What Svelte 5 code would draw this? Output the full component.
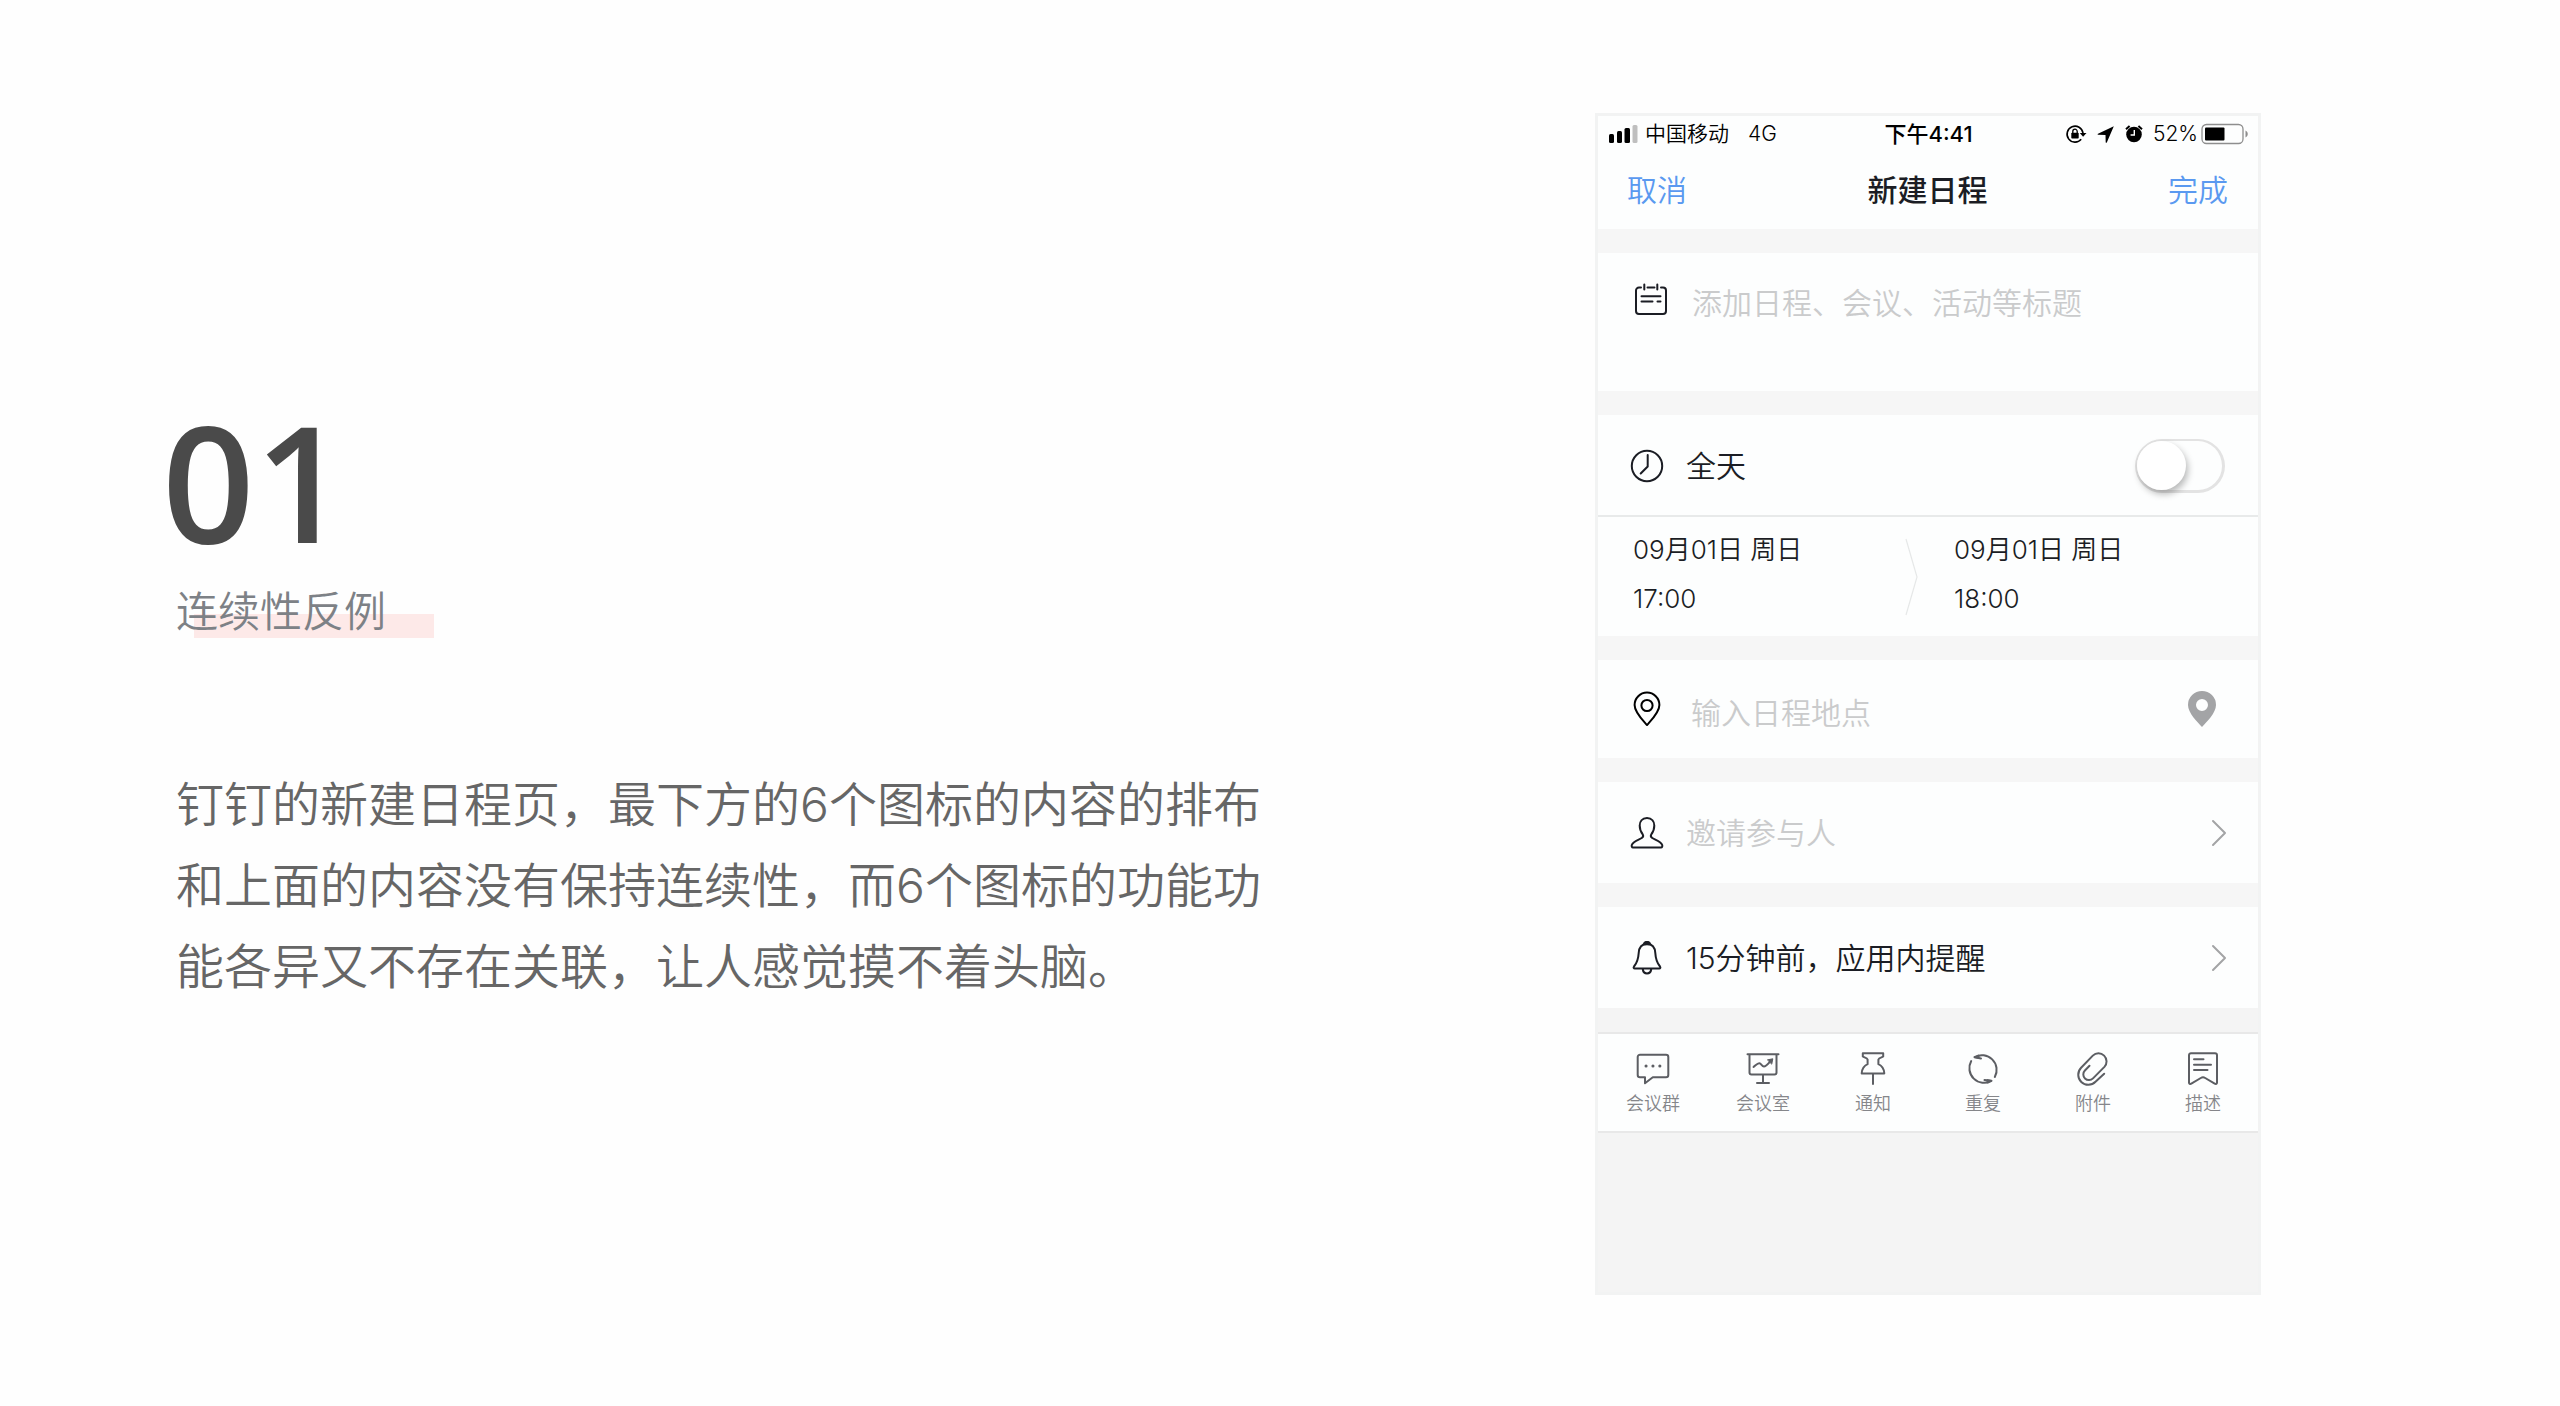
<script>
  let allDay = $state(false);
  let title = $state('');
  let place = $state('');

  const dates = [
    { day: '09月01日 周日', time: '17:00' },
    { day: '09月01日 周日', time: '18:00' }
  ];

  const tools = [
    { name: 'chat', label: '会议群' },
    { name: 'room', label: '会议室' },
    { name: 'pin', label: '通知' },
    { name: 'repeat', label: '重复' },
    { name: 'clip', label: '附件' },
    { name: 'note', label: '描述' }
  ];
</script>

{#snippet chevron()}
  <svg class="chevron" width="16" height="30" viewBox="0 0 16 30" aria-hidden="true">
    <path d="M2 3L14 15L2 27" />
  </svg>
{/snippet}

<main>
  <article>
    <h1>01</h1>
    <h2><span>连续性反例</span></h2>
    <p>钉钉的新建日程页，最下方的6个图标的内容的排布和上面的内容没有保持连续性，而6个图标的功能功能各异又不存在关联，让人感觉摸不着头脑。</p>
  </article>

  <section class="phone" aria-label="新建日程">
    <div class="status">
      <div class="carrier">
        <svg width="30" height="20" viewBox="0 0 30 20" aria-hidden="true">
          <rect x="1" y="10" width="5" height="9" rx="1.5" />
          <rect x="9" y="7" width="5" height="12" rx="1.5" />
          <rect x="16.500" y="4" width="5.500" height="15" rx="1.500" />
          <rect x="24.500" y="1" width="5" height="18" rx="1.500" fill="#bfbfbf" />
        </svg>
        <span>中国移动</span>
        <span class="network">4G</span>
      </div>
      <time>下午4:41</time>
      <div class="indicators">
        <svg width="22" height="20" viewBox="0 0 22 20" aria-hidden="true">
          <path d="M16.200 15.300A8 8 0 1 1 18 9" fill="none" stroke="#000" stroke-width="1.600" />
          <path d="M14.800 9H21.500L18.100 12.800z" />
          <rect x="6.300" y="8.800" width="7.400" height="5.700" rx="0.800" />
          <path d="M7.800 9V7.400a2.200 2.200 0 0 1 4.400 0V9" fill="none" stroke="#000" stroke-width="1.300" />
        </svg>
        <svg width="18" height="20" viewBox="0 0 18 20" aria-hidden="true">
          <path d="M16.800 2.200L1 9.800c-.6.300-.4 1 .2 1l7.300.2.200 7.200c0 .7.800.9 1.100.2z" />
        </svg>
        <svg width="18" height="20" viewBox="0 0 18 20" aria-hidden="true">
          <circle cx="9" cy="10.500" r="7.800" />
          <path d="M1 5.200L4.600 2M17 5.200L13.400 2" stroke="#000" stroke-width="2" />
          <path d="M9.300 6v5H5.600" fill="none" stroke="#fff" stroke-width="1.400" />
        </svg>
        <span>52%</span>
        <svg class="battery" width="48" height="22" viewBox="0 0 48 22" aria-hidden="true">
          <rect x="1" y="1.500" width="41" height="19" rx="4.500" fill="none" stroke="#8e8e8e" stroke-width="1.300" />
          <rect x="4" y="4.500" width="19.500" height="13" rx="1" />
          <path d="M44.500 7.500c3 1.500 3 5.500 0 7z" fill="#8e8e8e" />
        </svg>
      </div>
    </div>

    <header>
      <button type="button">取消</button>
      <h3>新建日程</h3>
      <button type="button">完成</button>
    </header>

    <label class="row subject">
      <svg class="icon" width="34" height="34" viewBox="0 0 34 34" aria-hidden="true">
        <path d="M7 4.500H5a3 3 0 0 0-3 3V28a3 3 0 0 0 3 3h24a3 3 0 0 0 3-3V7.500a3 3 0 0 0-3-3h-2M13.500 4.500h7M10.300 1.500v5M23.300 1.500v5M7.500 13.300h19M7.500 18.500h11M23.500 18.500h3" />
      </svg>
      <input type="text" bind:value={title} placeholder="添加日程、会议、活动等标题" aria-label="标题" />
    </label>

    <div class="card">
      <label class="row allday">
        <svg class="icon" width="34" height="34" viewBox="0 0 34 34" aria-hidden="true">
          <circle cx="17" cy="17" r="15.200" />
          <path d="M17.700 6v11.500L10.700 24.500" />
        </svg>
        <span class="grow">全天</span>
        <input class="switch" type="checkbox" role="switch" bind:checked={allDay} />
      </label>
      <div class="range">
        <button type="button"><span>{dates[0].day}</span><span>{dates[0].time}</span></button>
        <svg width="14" height="78" viewBox="0 0 14 78" aria-hidden="true">
          <path d="M1 1L12 39L1 77" fill="none" stroke="#e6e8e8" stroke-width="1.200" />
        </svg>
        <button type="button"><span>{dates[1].day}</span><span>{dates[1].time}</span></button>
      </div>
    </div>

    <div class="row place">
      <svg class="icon black" width="34" height="36" viewBox="0 0 34 36" aria-hidden="true">
        <path d="M17 34C13 29.500 4.600 21.500 4.600 14a12.400 12.400 0 0 1 24.800 0C29.400 21.500 21 29.500 17 34z" />
        <circle cx="17" cy="14.500" r="5.600" />
      </svg>
      <input type="text" bind:value={place} placeholder="输入日程地点" aria-label="地点" />
      <button type="button" aria-label="选择地点">
        <svg width="30" height="36" viewBox="0 0 30 36" aria-hidden="true">
          <path fill="#a3a4a6" fill-rule="evenodd" d="M15 36C10.500 31 1 22 1 14a14 14 0 0 1 28 0C29 22 19.500 31 15 36zM15 8a6 6 0 1 0 0 12a6 6 0 1 0 0-12z" />
        </svg>
      </button>
    </div>

    <button type="button" class="row people">
      <svg class="icon" width="34" height="34" viewBox="0 0 34 34" aria-hidden="true">
        <path d="M17 2c-5 0-7.300 3.600-7.300 7.600 0 3.600 1 6.200 2.800 8.400.8 1.200.8 2.800-.4 3.700C9.500 23.700 3 25 1.800 29c-.4 1.500.1 2.400 1.200 2.400h28c1.100 0 1.600-.9 1.200-2.400-1.200-4-7.700-5.300-10.300-7.300-1.200-.9-1.200-2.500-.4-3.700 1.800-2.200 2.800-4.800 2.800-8.400C24.300 5.600 22 2 17 2z" />
      </svg>
      <span class="grow hint">邀请参与人</span>
      {@render chevron()}
    </button>

    <button type="button" class="row remind">
      <svg class="icon" width="34" height="34" viewBox="0 0 34 34" aria-hidden="true">
        <path d="M17 3c-5.500 0-8 4-8.300 9-.4 6.500-1.300 9.500-4.700 13.500-.8 1-.3 2 .8 2h24.400c1.100 0 1.600-1 .8-2-3.400-4-4.300-7-4.700-13.500C25 7 22.500 3 17 3zM12.700 28c.4 2.900 2 4.400 4.300 4.400s3.900-1.500 4.300-4.400" />
        <path d="M13.800 3.300a3.300 3.300 0 0 1 6.400 0z" fill="#1b1d24" />
      </svg>
      <span class="grow">15分钟前，应用内提醒</span>
      {@render chevron()}
    </button>

    <nav>
      {#each tools as tool}
        <button type="button">
          <svg width="34" height="34" viewBox="0 0 34 34" aria-hidden="true">
            {#if tool.name === 'chat'}
              <path d="M4 2.700h26a2.300 2.300 0 0 1 2.300 2.300v18a2.300 2.300 0 0 1-2.300 2.300H16.800L9 31.300v-6H4a2.300 2.300 0 0 1-2.300-2.300V5A2.300 2.300 0 0 1 4 2.700z" />
              <path d="M10 14h.1M16.900 14h.1M23.800 14h.1" stroke-width="3" />
            {:else if tool.name === 'room'}
              <path d="M1.500 2.300h31M3.500 2.500V20.500a2 2 0 0 0 2 2h23a2 2 0 0 0 2-2V2.500M17 22.500V31M11 31h12M7.500 15c2-1.500 4-4 5.800-3.800 2 .2 2.500 3 4.700 3.300 2 0 4-2.500 6.200-5" />
              <path d="M21.800 7.800l5-1-1 5z" fill="#5c5e63" stroke-width="1" />
            {:else if tool.name === 'pin'}
              <path d="M6.800 1.200h20.400V4.500c-1.700 1-4.300 1.500-4.800 3v4.700c3.600 1.600 5.600 4.800 5.900 9.200H5.700c.3-4.400 2.300-7.600 5.900-9.200V7.500c-.5-1.500-3.100-2-4.800-3zM17 21.500V32" />
            {:else if tool.name === 'repeat'}
              <path d="M5.200 9A14.700 14.700 0 0 0 25.500 28.800L18.500 28M28.800 25A14.700 14.700 0 0 0 8.500 5.200L15 6.500" />
              <path d="M8.500 5.200L13 3V6zM25.500 28.800L21 31V28z" fill="#5c5e63" stroke-width="1" />
            {:else if tool.name === 'clip'}
              <path d="M28.200 21.800L19.500 29.800A9.800 9.800 0 0 1 5.100 15.800L16.800 3.600A8.100 8.100 0 0 1 28.400 14.900L17 26.400A5.600 5.600 0 0 1 8.900 18.500L13.500 13.800" />
            {:else}
              <path d="M5 1.200h24a2 2 0 0 1 2 2v27.300c0 1.400-1.200 1.900-2.300 1.200L19.200 26c-1.500-.9-2.900-.9-4.400 0l-9.500 5.700c-1.100.7-2.300.2-2.300-1.200V3.200a2 2 0 0 1 2-2zM8 7.300h9.500M8 12.700h17M8 18h13.500" />
            {/if}
          </svg>
          <span>{tool.label}</span>
        </button>
      {/each}
    </nav>
  </section>
</main>

<style>
  :global(body) {
    margin: 0;
    background: #fefefe;
  }

  main {
    box-sizing: border-box;
    min-height: 100vh;
    padding: 113px 299px 111px 162px;
    display: flex;
    align-items: center;
    justify-content: space-between;
    gap: 80px;
    font-family: Inter, "Noto Sans CJK SC", sans-serif;
    font-weight: 350;
    color: #1b1d24;
  }

  h1, h2, h3, p {
    margin: 0;
  }

  button, input {
    font: inherit;
    color: inherit;
    border: 0;
    padding: 0;
    margin: 0;
    background: none;
  }

  svg {
    display: block;
    flex: none;
  }

  article {
    flex: 0 1 1104px;
    padding-top: 4px;
  }

  h1 {
    font-family: "Open Sans", sans-serif;
    font-size: 162px;
    line-height: 150px;
    font-weight: 600;
    color: #4a4a4a;
  }

  h2 {
    margin: 27px 0 0 14px;
    font-size: 42px;
    line-height: 60px;
    font-weight: 350;
    color: #7d8186;
  }

  h2 span {
    display: inline-block;
    padding-right: 48px;
    background: linear-gradient(#fde9e8, #fde9e8) no-repeat right 32px / 240px 24px;
  }

  p {
    margin: 122px 0 0 14px;
    font-size: 48px;
    line-height: 81px;
    color: #666;
  }

  .phone {
    flex: 0 0 660px;
    align-self: stretch;
    border: 3px solid #f2f3f3;
    background: #f4f4f4;
    display: flex;
    flex-direction: column;
  }

  .status {
    height: 36px;
    padding: 0 9px 0 10px;
    background: #fdfefe;
    display: grid;
    grid-template-columns: 1fr auto 1fr;
    align-items: center;
    font-size: 21px;
    line-height: 30px;
    color: #000;
  }

  .carrier, .indicators {
    display: flex;
    align-items: center;
    gap: 7px;
  }

  .network {
    margin-left: 12px;
  }

  .status time {
    font-size: 22px;
    font-weight: 500;
  }

  .indicators {
    justify-content: flex-end;
    gap: 10px;
  }

  .battery {
    margin-left: -7px;
  }

  header {
    height: 77px;
    box-sizing: border-box;
    padding: 0 30px 5px 29px;
    background: #fdfefe;
    display: flex;
    align-items: center;
    justify-content: space-between;
    font-size: 30px;
  }

  header button {
    color: #5a99f0;
  }

  h3 {
    font-size: 30px;
    font-weight: 500;
  }

  .row {
    box-sizing: border-box;
    width: 100%;
    display: flex;
    align-items: center;
    gap: 22px;
    padding: 0 33px 0 32px;
    background: #fdfefe;
    border-top: 24px solid #f6f6f6;
    font-size: 30px;
    line-height: 44px;
    text-align: left;
  }

  .row input[type="text"] {
    flex: 1;
    min-width: 0;
    height: 44px;
    outline: none;
  }

  .row input::placeholder, .hint {
    color: #cacbcc;
    opacity: 1;
  }

  .grow {
    flex: 1;
  }

  .icon {
    fill: none;
    stroke: #1b1d24;
    stroke-width: 2;
    stroke-linecap: round;
    stroke-linejoin: round;
  }

  .icon.black {
    stroke: #000;
  }

  .chevron {
    fill: none;
    stroke: #a3a4a6;
    stroke-width: 2;
    stroke-linecap: round;
    stroke-linejoin: round;
  }

  .subject {
    height: 162px;
    padding: 28px 36px;
    gap: 24px;
    align-items: flex-start;
  }

  .subject .icon {
    margin-top: 2px;
  }

  .allday {
    height: 124px;
    padding-top: 2px;
  }

  .switch {
    appearance: none;
    box-sizing: border-box;
    width: 90px;
    height: 54px;
    border: 2px solid #e3e3e3;
    border-right-width: 3px;
    border-bottom-width: 3px;
    border-radius: 27px;
    display: flex;
  }

  .switch::before {
    content: "";
    width: 49px;
    height: 49px;
    border-radius: 50%;
    background: #fff;
    box-shadow: 2px 4px 7px rgba(0, 0, 0, 0.28);
  }

  .switch:checked {
    justify-content: flex-end;
    background: #5a99f0;
  }

  .range {
    height: 121px;
    box-sizing: border-box;
    border-top: 2px solid #e8eaea;
    padding: 0 35px;
    background: #fdfefe;
    display: grid;
    grid-template-columns: 272px 14px 1fr;
    align-items: center;
  }

  .range button {
    display: flex;
    flex-direction: column;
    align-items: flex-start;
    gap: 9px;
    padding-bottom: 5px;
    font-size: 26px;
    line-height: 40px;
  }

  .range button:last-child {
    padding-left: 35px;
  }

  .place {
    height: 122px;
    gap: 27px;
    padding-right: 41px;
  }

  .place input[type="text"] {
    padding-top: 8px;
  }

  .people, .remind {
    height: 125px;
    padding-right: 31px;
  }

  nav {
    margin-top: 24px;
    border-top: 2px solid #e8e8e8;
    border-bottom: 2px solid #e8e8e8;
    background: #fdfefe;
    display: grid;
    grid-template-columns: repeat(6, 1fr);
  }

  nav button {
    height: 97px;
    display: flex;
    flex-direction: column;
    align-items: center;
    justify-content: center;
    gap: 4px;
    padding-top: 4px;
    font-size: 18px;
    line-height: 28px;
    color: #85868a;
  }

  nav svg {
    fill: none;
    stroke: #5c5e63;
    stroke-width: 2;
    stroke-linecap: round;
    stroke-linejoin: round;
  }
</style>
